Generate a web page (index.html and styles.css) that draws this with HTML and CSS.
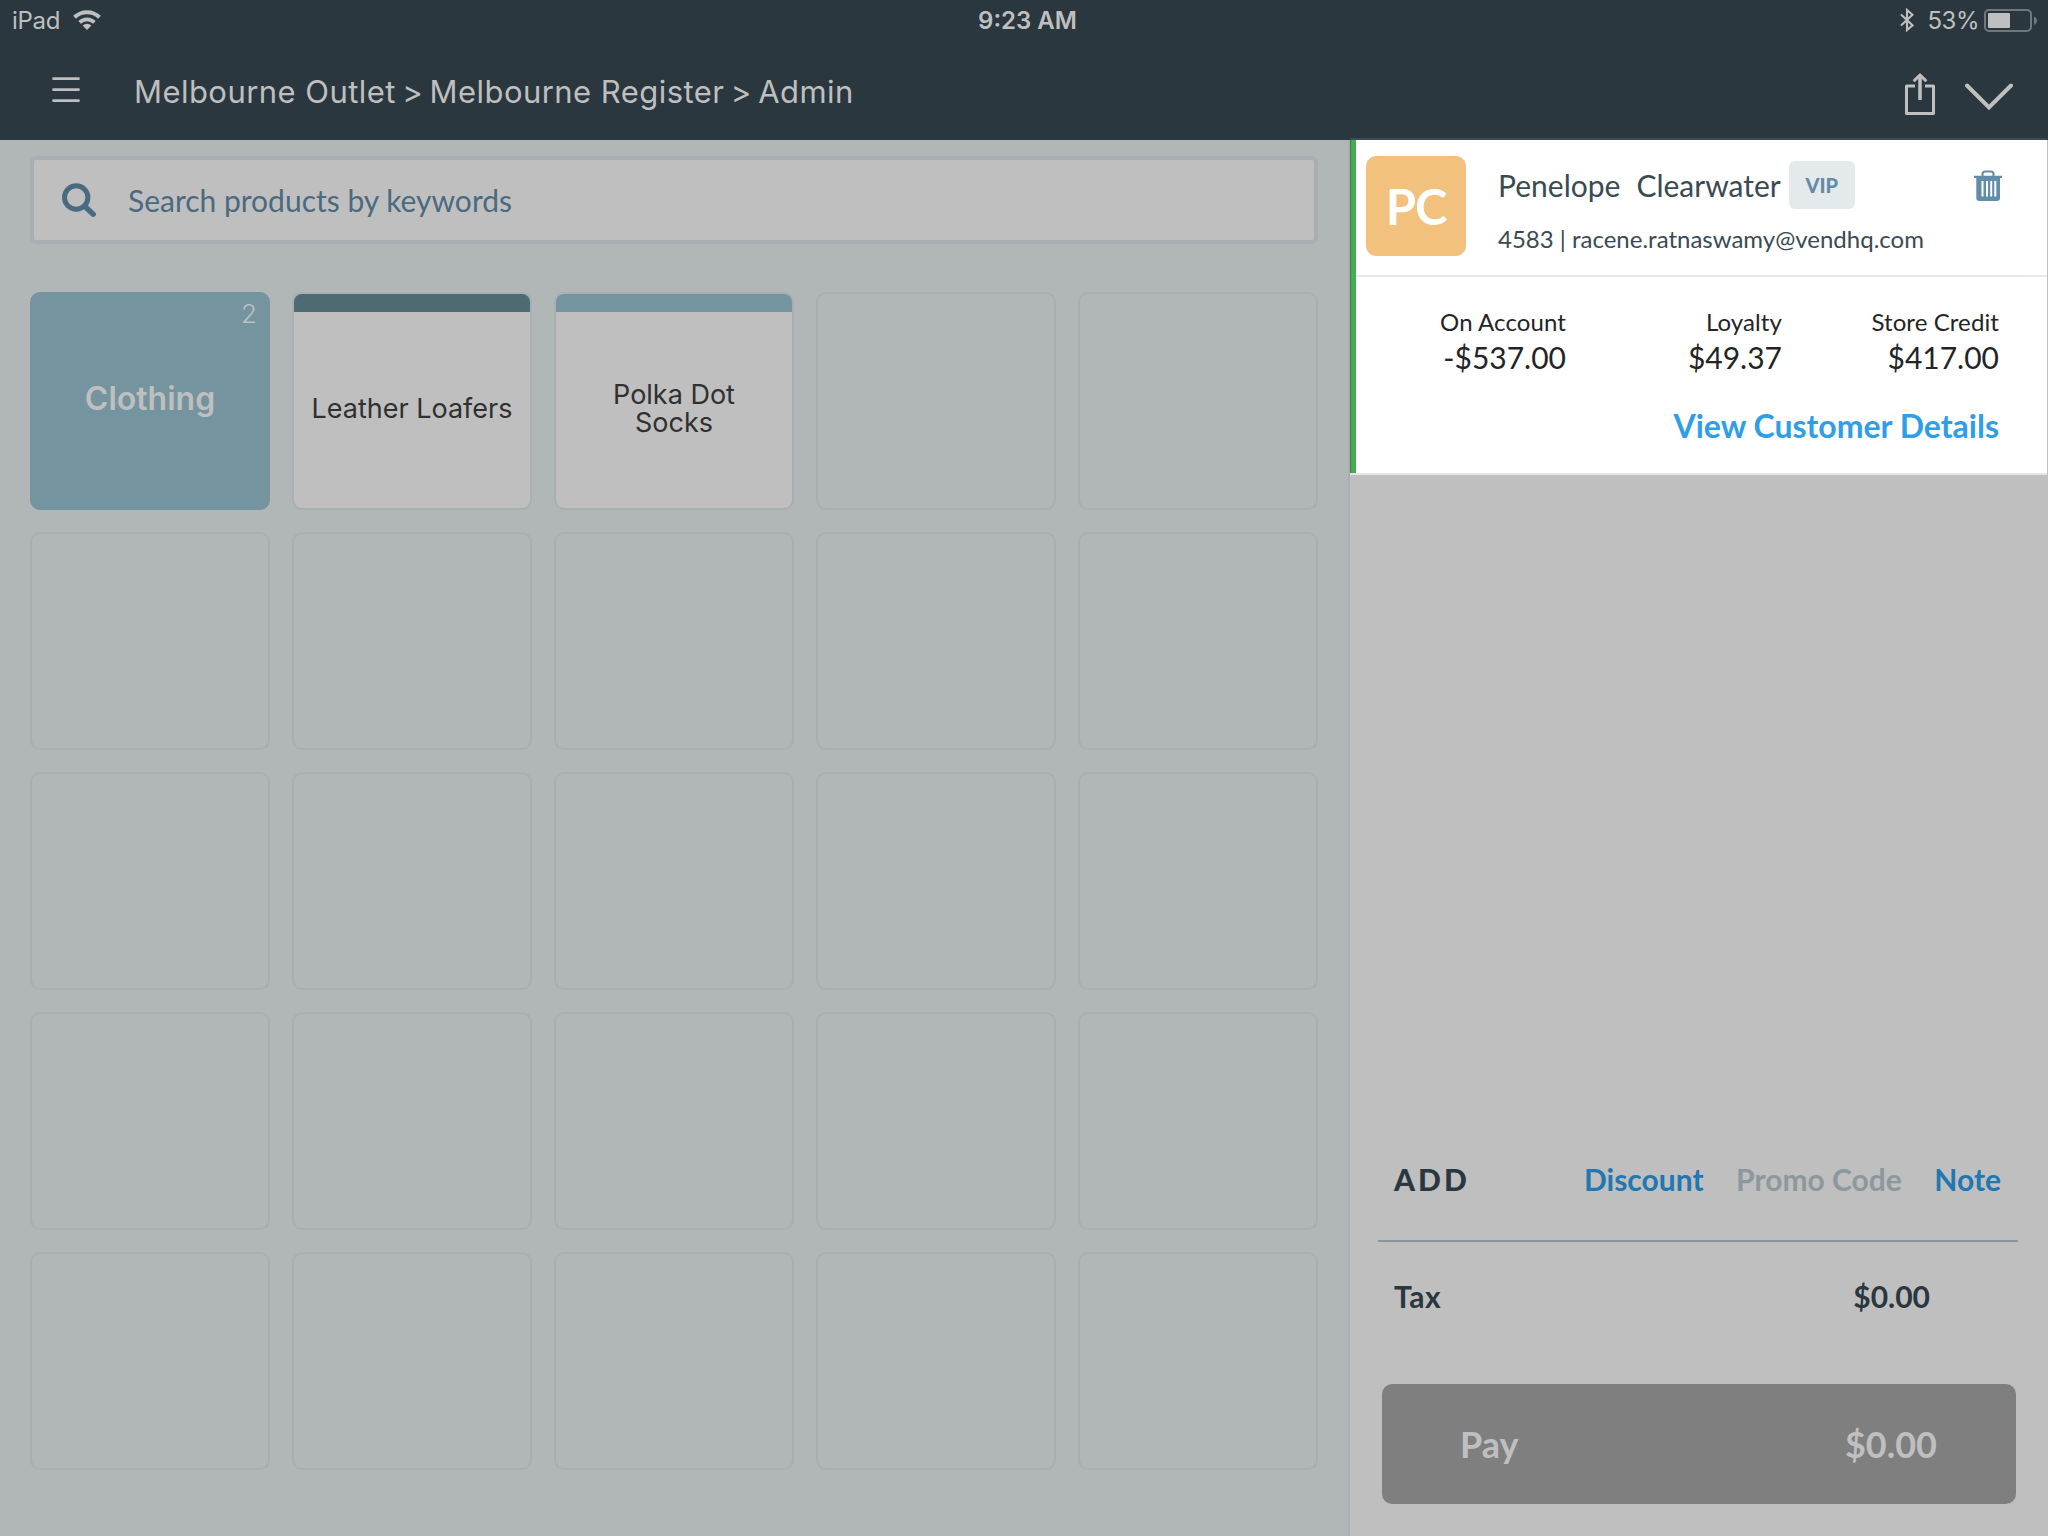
FILE: index.html
```html
<!DOCTYPE html>
<html lang="en">
<head>
<meta charset="utf-8">
<title>Melbourne Register</title>
<link rel="stylesheet" href="styles.css">
</head>
<body>
<header class="header">
  <div class="status">
    <div class="status-left">
      <span>iPad</span>
      <svg class="wifi" width="28" height="20" viewBox="0 0 28 20" fill="none">
        <path d="M1.5 7.3a18 18 0 0 1 25 0" stroke="currentColor" stroke-width="4"/>
        <path d="M6.6 12.4a10.6 10.6 0 0 1 14.8 0" stroke="currentColor" stroke-width="3.6"/>
        <path d="M14 20l-4.4-4.4a6.3 6.3 0 0 1 8.8 0z" fill="currentColor"/>
      </svg>
    </div>
    <span class="clock">9:23 AM</span>
    <div class="status-right">
      <svg class="bluetooth" width="14" height="24" viewBox="0 0 14 24" fill="none" stroke="currentColor" stroke-width="2.1">
        <path d="M1 6.4l11.500 10.900L7 22V2l5.500 4.800L1 17.600"/>
      </svg>
      <span class="percent">53%</span>
      <svg class="battery" width="54" height="24" viewBox="0 0 54 24">
        <rect x="1" y="1" width="46" height="21" rx="4" fill="none" stroke="#70787c" stroke-width="2"/>
        <rect x="4" y="4" width="22" height="15" rx="1" fill="currentColor"/>
        <path d="M50 7.500c4 1.800 4 6.500 0 8.300z" fill="#70787c"/>
      </svg>
    </div>
  </div>
  <nav class="nav">
    <svg class="menu" width="28" height="26" viewBox="0 0 28 26" stroke="currentColor" stroke-width="2.700" stroke-linecap="round">
      <path d="M1.500 1.700h25M1.500 12.700h25M1.500 23.700h25"/>
    </svg>
    <h1 class="title">Melbourne Outlet <span class="sep">&gt;</span> Melbourne Register <span class="sep">&gt;</span> Admin</h1>
    <svg class="share" width="30" height="44" viewBox="0 0 30 44" fill="none" stroke="currentColor" stroke-width="3">
      <path d="M10 14H1.500v27.500h27V14H20" stroke-linejoin="round"/>
      <path d="M15 28V3" stroke-width="3.600"/>
      <path d="M9.500 8.300L15 3l5.500 5.300" stroke-linecap="round"/>
    </svg>
    <svg class="chevron" width="48" height="28" viewBox="0 0 48 28" fill="none" stroke="currentColor" stroke-width="4" stroke-linecap="round">
      <path d="M2 2.500l22 22 22-22"/>
    </svg>
  </nav>
</header>
<div class="content">
  <main class="products">
    <div class="search">
      <svg width="34" height="34" viewBox="0 0 34 34" fill="none" stroke="currentColor">
        <circle cx="14.200" cy="14.500" r="11.700" stroke-width="5"/>
        <path d="M23 23.500l8.200 7.700" stroke-width="5.400" stroke-linecap="round"/>
      </svg>
      <span>Search products by keywords</span>
    </div>
    <div class="grid">
      <div class="tile folder"><span class="count">2</span>Clothing</div>
      <div class="tile product dark"><span>Leather Loafers</span></div>
      <div class="tile product light"><span>Polka Dot<br>Socks</span></div>
      <div class="tile"></div><div class="tile"></div>
      <div class="tile"></div><div class="tile"></div><div class="tile"></div><div class="tile"></div><div class="tile"></div>
      <div class="tile"></div><div class="tile"></div><div class="tile"></div><div class="tile"></div><div class="tile"></div>
      <div class="tile"></div><div class="tile"></div><div class="tile"></div><div class="tile"></div><div class="tile"></div>
      <div class="tile"></div><div class="tile"></div><div class="tile"></div><div class="tile"></div><div class="tile"></div>
    </div>
  </main>
  <aside class="sale">
    <section class="customer">
      <div class="profile">
        <div class="avatar">PC</div>
        <div class="identity">
          <div class="name"><span>Penelope</span><span>Clearwater</span><span class="vip">VIP</span></div>
          <div class="contact">4583 | racene.ratnaswamy@vendhq.com</div>
        </div>
        <svg class="trash" width="28" height="32" viewBox="0 0 28 32" fill="none">
          <path d="M8.500 6.500V4.200c0-1.500 1-2.700 2.500-2.700h6c1.500 0 2.500 1.200 2.500 2.700v2.300" stroke="#628ca8" stroke-width="2"/>
          <path d="M0 5.800h28v2.200h-2v20a3 3 0 0 1-3 3H5.300A3 3 0 0 1 2.300 28V8H0z" fill="#628ca8"/>
          <path d="M8.500 11v15.500M13 11v15.500M17.200 11v15.500M21.300 11v15.500" stroke="#fff" stroke-width="2"/>
        </svg>
      </div>
      <div class="balances">
        <div><div class="label">On Account</div><div class="value">-$537.00</div></div>
        <div><div class="label">Loyalty</div><div class="value">$49.37</div></div>
        <div><div class="label">Store Credit</div><div class="value">$417.00</div></div>
      </div>
      <a class="details">View Customer Details</a>
    </section>
    <section class="totals">
      <div class="add">
        <span class="add-label">ADD</span>
        <a>Discount</a><a class="off">Promo Code</a><a>Note</a>
      </div>
      <div class="tax"><span>Tax</span><span>$0.00</span></div>
      <div class="pay"><span>Pay</span><span>$0.00</span></div>
    </section>
  </aside>
</div>
</body>
</html>
```
FILE: styles.css
```css
* { box-sizing: border-box; }
body {
  margin: 0;
  width: 2048px;
  height: 1536px;
  display: flex;
  flex-direction: column;
  overflow: hidden;
  background: #b1b6b7;
  font-family: Lato, sans-serif;
}
svg { display: block; flex: none; }

/* Header */
.header {
  height: 140px;
  background: #2b373f;
  color: #bfbfbf;
  font-family: Inter, sans-serif;
}
.status {
  height: 41px;
  display: grid;
  grid-template-columns: 1fr auto 1fr;
  font-size: 24px;
  line-height: 41px;
  padding: 0 10px 0 12px;
}
.status-left { display: flex; letter-spacing: -0.3px; }
.wifi { margin: 10px 0 0 13px; }
.clock { font-weight: 600; letter-spacing: 0; margin-left: 5px; }
.status-right { display: flex; justify-content: flex-end; }
.bluetooth { margin: 8px 14px 0 0; }
.percent { letter-spacing: -0.5px; }
.battery { margin: 9px 0 0 5px; }
.nav {
  height: 99px;
  padding: 0 35px 0 52px;
  display: flex;
  align-items: flex-start;
}
.menu { margin-top: 36px; }
.title {
  margin: 21px auto 0 54px;
  font-size: 31px;
  line-height: 60px;
  font-weight: 400;
  letter-spacing: 0.45px;
}
.sep { margin: 0 -2.8px; }
.share { margin: 31px 30px 0 0; }
.chevron { margin-top: 42px; }

.content { flex: 1; display: flex; }

/* Product area */
.products { width: 1348px; padding: 16px 30px 0; }
.search {
  height: 88px;
  border: 4px solid #a9aeb2;
  border-radius: 6px;
  background: #bfbfbf;
  color: #4a6a7f;
  display: flex;
  align-items: center;
  gap: 32px;
  padding-left: 28px;
  font-size: 30px;
}
.grid {
  margin-top: 48px;
  display: grid;
  grid-template-columns: repeat(5, 240px);
  grid-auto-rows: 218px;
  gap: 22px;
}
.tile {
  border: 2px solid #a9aeb0;
  border-radius: 10px;
  display: flex;
  align-items: center;
  justify-content: center;
  text-align: center;
  font-family: Inter, sans-serif;
}
.folder {
  position: relative;
  border: 0;
  background: #74959f;
  color: #bfbfbf;
  font-size: 32px;
  font-weight: 600;
  padding-bottom: 6px;
}
.count {
  position: absolute;
  top: 6px;
  right: 13px;
  font-size: 26px;
  line-height: 32px;
  font-weight: 300;
}
.product {
  border-color: #a9aeb2;
  background: #bfbfbf;
  color: #303030;
  overflow: hidden;
  font-size: 27px;
  line-height: 28px;
  flex-direction: column;
  padding-bottom: 2px;
}
.product::before { content: ""; flex: none; width: 100%; height: 18px; }
.product span { margin: auto; }
.dark::before { background: #4e6a73; }
.light::before { background: #74959f; }

/* Sale panel */
.sale {
  width: 700px;
  border-left: 2px solid #a9aeb2;
  background: #bfbfbf;
  display: flex;
  flex-direction: column;
  color: #2b373f;
}
.customer {
  height: 337px;
  margin: -2px 1px 0 0;
  border-top: 2px solid #394a53;
  border-bottom: 2px solid #e1e7ea;
  background: linear-gradient(90deg, #338345 1px, #43af4c 1px 6px, #fff 6px);
  padding-left: 6px;
}
.profile {
  height: 137px;
  border-bottom: 2px solid #e5eaed;
  padding: 16px 45px 0 10px;
  display: flex;
  color: #3a4a54;
}
.avatar {
  width: 100px;
  height: 100px;
  border-radius: 10px;
  background: #f1c17d;
  color: #fff;
  font-size: 49px;
  letter-spacing: -1px;
  font-weight: 700;
  line-height: 100px;
  text-align: center;
}
.identity { margin: 5px auto 0 32px; }
.name { display: flex; font-size: 30px; line-height: 48px; }
.name span + span { margin-left: 16px; }
.name .vip {
  margin-left: 8px;
  width: 66px;
  border-radius: 6px;
  background: #e4eaec;
  color: #628ca8;
  font-size: 20px;
  font-weight: 900;
  text-align: center;
}
.contact { margin-top: 15px; font-size: 24px; line-height: 30px; }
.trash { margin-top: 14px; }
.balances {
  display: grid;
  grid-template-columns: 210px 216px 217px;
  padding-top: 29px;
  text-align: right;
  color: #222426;
}
.label { font-size: 24px; line-height: 31px; letter-spacing: 0.1px; }
.value { font-size: 30px; line-height: 40px; }
.details {
  display: block;
  margin: 29px 48px 0 0;
  font-size: 32px;
  line-height: 40px;
  font-weight: 700;
  text-align: right;
  color: #2e9ee8;
}

/* Totals */
.totals { margin-top: auto; padding: 0 30px 32px 28px; font-weight: 700; font-size: 30px; line-height: 40px; }
.add {
  height: 83px;
  border-bottom: 2px solid #87979b;
  padding: 0 17px 0 16px;
  display: flex;
  gap: 32.5px;
}
.add-label { margin-right: auto; font-weight: 900; letter-spacing: 3px; }
.add a { color: #2177b1; }
.add a.off { color: #8b999c; }
.tax {
  padding: 34px 88px 0 16px;
  display: flex;
  justify-content: space-between;
}
.tax span:first-child { letter-spacing: 0.6px; }
.pay {
  margin: 68px 2px 0 4px;
  height: 120px;
  border-radius: 10px;
  background: #7f7f7f;
  color: #bfbfbf;
  padding: 0 79px 0 78px;
  display: flex;
  align-items: center;
  justify-content: space-between;
  font-size: 36px;
}
```
